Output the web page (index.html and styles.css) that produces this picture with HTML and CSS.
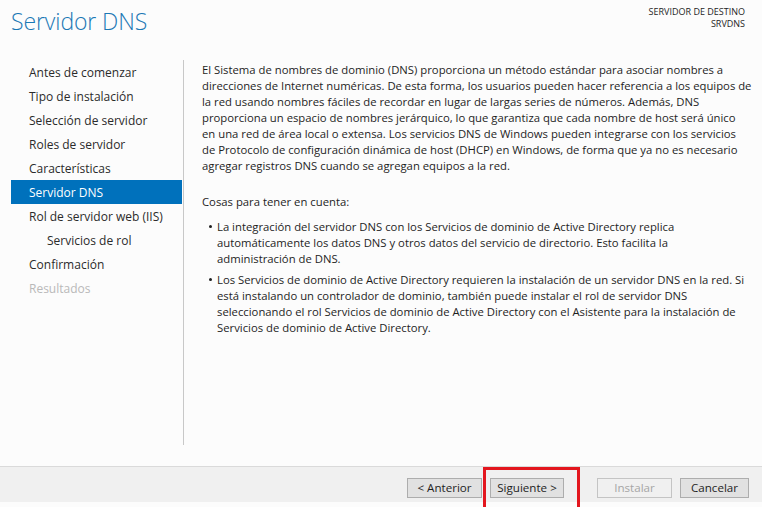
FILE: index.html
```html
<!DOCTYPE html>
<html lang="es">
<head>
<meta charset="utf-8">
<title>Servidor DNS</title>
<link rel="stylesheet" href="styles.css">
</head>
<body>
<div class="window">
  <header class="header">
    <h1 class="title">Servidor DNS</h1>
    <div class="target">
      <div>SERVIDOR DE DESTINO</div>
      <div>SRVDNS</div>
    </div>
  </header>
  <div class="main">
    <nav class="nav">
      <div class="nav-item">Antes de comenzar</div>
      <div class="nav-item">Tipo de instalación</div>
      <div class="nav-item">Selección de servidor</div>
      <div class="nav-item">Roles de servidor</div>
      <div class="nav-item">Características</div>
      <div class="nav-item active">Servidor DNS</div>
      <div class="nav-item">Rol de servidor web (IIS)</div>
      <div class="nav-item sub">Servicios de rol</div>
      <div class="nav-item">Confirmación</div>
      <div class="nav-item disabled">Resultados</div>
    </nav>
    <section class="content">
      <p class="intro">El Sistema de nombres de dominio (DNS) proporciona un método estándar para asociar nombres a<br>direcciones de Internet numéricas. De esta forma, los usuarios pueden hacer referencia a los equipos de<br>la red usando nombres fáciles de recordar en lugar de largas series de números. Además, DNS<br>proporciona un espacio de nombres jerárquico, lo que garantiza que cada nombre de host será único<br>en una red de área local o extensa. Los servicios DNS de Windows pueden integrarse con los servicios<br>de Protocolo de configuración dinámica de host (DHCP) en Windows, de forma que ya no es necesario<br>agregar registros DNS cuando se agregan equipos a la red.</p>
      <p class="notes-title">Cosas para tener en cuenta:</p>
      <ul class="notes">
        <li>La integración del servidor DNS con los Servicios de dominio de Active Directory replica<br>automáticamente los datos DNS y otros datos del servicio de directorio. Esto facilita la<br>administración de DNS.</li>
        <li>Los Servicios de dominio de Active Directory requieren la instalación de un servidor DNS en la red. Si<br>está instalando un controlador de dominio, también puede instalar el rol de servidor DNS<br>seleccionando el rol Servicios de dominio de Active Directory con el Asistente para la instalación de<br>Servicios de dominio de Active Directory.</li>
      </ul>
    </section>
  </div>
  <footer class="footer">
    <button class="btn">&lt; Anterior</button>
    <button class="btn next">Siguiente &gt;</button>
    <button class="btn install" disabled>Instalar</button>
    <button class="btn">Cancelar</button>
    <div class="highlight"></div>
  </footer>
</div>
</body>
</html>
```

FILE: styles.css
```css
* { box-sizing: border-box; }
html, body { margin: 0; padding: 0; }
body {
  width: 762px;
  height: 507px;
  background: #ffffff;
  font-family: "Open Sans", "Noto Sans", sans-serif;
  color: #1e1e1e;
  overflow: hidden;
}
.window {
  position: relative;
  width: 762px;
  height: 507px;
  background: #fcfcfc;
}
.header {
  height: 60px;
  display: flex;
  justify-content: space-between;
  align-items: flex-start;
}
.title {
  margin: 0;
  padding: 6px 0 0 11px;
  font-size: 23px;
  font-weight: 300;
  color: #1b78b5;
  line-height: 30px;
  letter-spacing: -0.1px;
}
.target {
  padding: 6px 17px 0 0;
  text-align: right;
  font-size: 9px;
  line-height: 12px;
  color: #1e1e1e;
}
.main {
  height: 406px;
  display: flex;
  align-items: flex-start;
}
.nav {
  width: 173px;
  margin-left: 11px;
  height: 385px;
  border-right: 1px solid #c8c8c8;
}
.nav-item {
  height: 24px;
  line-height: 25px;
  padding-left: 18px;
  font-size: 12px;
  color: #2b2b2b;
  white-space: nowrap;
  margin-right: 1px;
}
.nav-item.sub { padding-left: 36px; }
.nav-item.active {
  background: #0071bc;
  color: #ffffff;
}
.nav-item.disabled { color: #b9b9b9; }
.content {
  padding-left: 18px;
  padding-top: 2px;
  font-size: 11.3px;
  line-height: 16px;
  white-space: nowrap;
}
.content p { margin: 0; }
.intro { margin-bottom: 20px !important; }
.notes-title { margin-bottom: 9px !important; }
.notes {
  margin: 0;
  padding: 0 0 0 15px;
  list-style: none;
}
.notes li {
  position: relative;
  margin-bottom: 5px;
}
.notes li::before {
  content: "";
  position: absolute;
  left: -8px;
  top: 6px;
  width: 3px;
  height: 3px;
  background: #1e1e1e;
  border-radius: 50%;
}
.footer {
  height: 36px;
  background: #f0f0f0;
  border-top: 1px solid #dadada;
  display: flex;
  align-items: center;
  padding-top: 6px;
  padding-left: 407px;
}
.btn {
  height: 20px;
  padding: 0;
  border: 1px solid #adadad;
  background: #e1e1e1;
  font-family: inherit;
  font-size: 11.6px;
  color: #1e1e1e;
  line-height: 18px;
  margin: 0;
}
.btn:nth-child(1) { width: 75px; margin-right: 8px; }
.btn.next { width: 74px; margin-right: 33px; }
.btn.install {
  width: 75px;
  margin-right: 8px;
  background: #f0f0f0;
  border-color: #c4c4c4;
  color: #a6a6a6;
}
.btn:nth-child(4) { width: 69px; }
.highlight {
  position: absolute;
  left: 483px;
  top: 467px;
  width: 97px;
  height: 43px;
  border: 3px solid #e3161e;
}
```
